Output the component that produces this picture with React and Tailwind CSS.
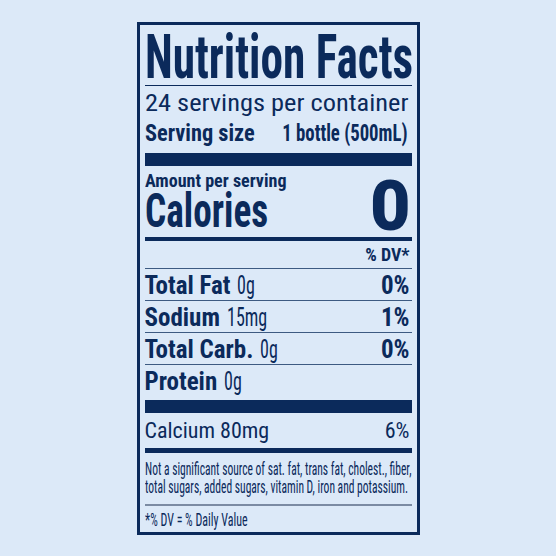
const rows = [
  { name: "Total Fat", amount: "0g", dv: "0%" },
  { name: "Sodium", amount: "15mg", dv: "1%" },
  { name: "Total Carb.", amount: "0g", dv: "0%" },
];

export default function App() {
  return (
    <div className="w-[556px] h-[556px] bg-[#dce9f8] flex items-center justify-center font-['Roboto_Condensed',sans-serif] text-[#0b2a5b]">
      <div className="w-[283px] h-[513px] border-[3px] border-[#0b2a5b] px-[5px] flex flex-col">
        {/* Heading */}
        <div className="mt-[4px] h-[56px] origin-left scale-x-[0.73] text-[62px] font-bold leading-[56px] whitespace-nowrap">
          Nutrition Facts
        </div>
        <div className="h-px bg-[#0b2a5b]" />
        <div className="h-[34px] origin-left scale-x-[1.1] text-[24px] leading-[34px] whitespace-nowrap">
          24 servings per container
        </div>
        <div className="h-[26px] flex justify-between pr-[4px] text-[24px] font-bold leading-[26px] whitespace-nowrap">
          <span className="w-[108px] flex">
            <span className="shrink-0 origin-left scale-x-[0.93]">Serving size</span>
          </span>
          <span className="w-[124px] flex justify-end">
            <span className="shrink-0 origin-right scale-x-[0.78]">1 bottle (500mL)</span>
          </span>
        </div>
        <div className="mt-[7px] h-[13px] bg-[#0b2a5b]" />

        {/* Calories */}
        <div className="h-[71px] flex justify-between">
          <div className="pt-[5px] font-bold whitespace-nowrap">
            <div className="h-[20px] origin-left scale-x-[0.95] text-[19px] leading-[20px]">Amount per serving</div>
            <div className="h-[40px] origin-left scale-x-[0.76] text-[49px] leading-[40px]">Calories</div>
          </div>
          <div className="pt-[10px] pr-[1px] font-['Roboto',sans-serif] text-[70px] font-black leading-[60px]">
            0
          </div>
        </div>
        <div className="h-[4px] bg-[#0b2a5b]" />
        <div className="h-[27px] pr-[2px] text-right text-[18px] font-bold leading-[27px]">% DV*</div>

        {/* Nutrients */}
        {rows.map((r) => (
          <div
            key={r.name}
            className="h-[32px] flex justify-between border-t border-[#3d5a82] pr-[2px] text-[25px] leading-[33px] whitespace-nowrap"
          >
            <span>
              <span className="font-bold">{r.name}</span>
              <span className="ml-[7px] inline-block origin-left scale-x-[0.72]">{r.amount}</span>
            </span>
            <span className="font-bold">{r.dv}</span>
          </div>
        ))}
        <div className="h-[36px] border-t border-[#3d5a82] text-[25px] leading-[33px] whitespace-nowrap">
          <span className="font-bold">Protein</span>
          <span className="ml-[7px] inline-block origin-left scale-x-[0.72]">0g</span>
        </div>
        <div className="h-[13px] bg-[#0b2a5b]" />
        <div className="h-[35px] flex justify-between pr-[2px] text-[22px] leading-[35px]">
          <span>Calcium 80mg</span>
          <span>6%</span>
        </div>
        <div className="h-[5px] bg-[#0b2a5b]" />

        {/* Footnote */}
        <div className="pt-[7px] text-[19px] leading-[18px] whitespace-nowrap">
          <div className="origin-left scale-x-[0.607]">
            Not a significant source of sat. fat, trans fat, cholest., fiber,
          </div>
          <div className="origin-left scale-x-[0.607]">
            total sugars, added sugars, vitamin D, iron and potassium.
          </div>
        </div>
        <div className="mt-[8px] h-[2px] bg-[#7b8ba3]" />
        <div className="pt-[5px] text-[19px] leading-[18px] whitespace-nowrap">
          <div className="origin-left scale-x-[0.63]">*% DV = % Daily Value</div>
        </div>
      </div>
    </div>
  );
}
